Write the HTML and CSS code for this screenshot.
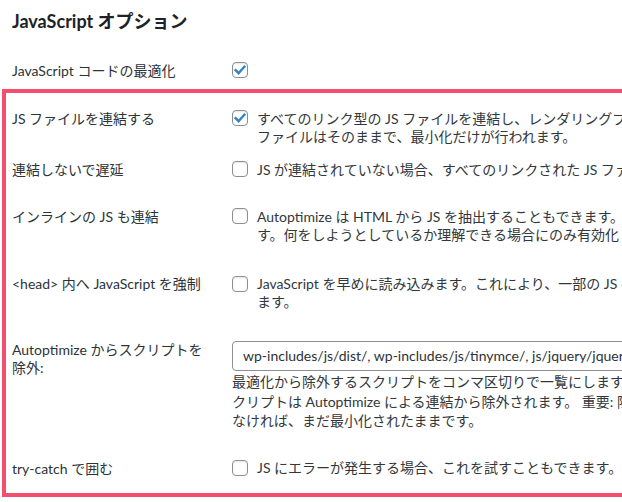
FILE: index.html
```html
<!DOCTYPE html>
<html lang="ja">
<head>
<meta charset="utf-8">
<title>JavaScript オプション</title>
<link rel="stylesheet" href="styles.css">
</head>
<body>
<div class="page">
  <h2 class="title">JavaScript オプション</h2>
  <div class="form">
    <div class="row">
      <div class="label">JavaScript コードの最適化</div>
      <div class="field">
        <span class="cb on"><svg viewBox="0 0 16 16" width="16" height="16"><path d="M3.6 8.2 L6.6 11.2 L12.4 4.6" /></svg></span>
      </div>
    </div>
    <div class="row">
      <div class="label">JS ファイルを連結する</div>
      <div class="field">
        <span class="cb on"><svg viewBox="0 0 16 16" width="16" height="16"><path d="M3.6 8.2 L6.6 11.2 L12.4 4.6" /></svg></span>
        <div class="desc">すべてのリンク型の JS ファイルを連結し、レンダリングブロックを減らします。このオプションが無効な場合、JS<br>ファイルはそのままで、最小化だけが行われます。</div>
      </div>
    </div>
    <div class="row row-sub">
      <div class="label">連結しないで遅延</div>
      <div class="field">
        <span class="cb"></span>
        <div class="desc">JS が連結されていない場合、すべてのリンクされた JS ファイルに defer 属性を追加します。</div>
      </div>
    </div>
    <div class="row row-a">
      <div class="label">インラインの JS も連結</div>
      <div class="field">
        <span class="cb"></span>
        <div class="desc">Autoptimize は HTML から JS を抽出することもできます。ただし、多くのテーマやプラグインでエラーが発生する場合がありま<br>す。何をしようとしているか理解できる場合にのみ有効化してください。</div>
      </div>
    </div>
    <div class="row row-b">
      <div class="label">&lt;head&gt; 内へ JavaScript を強制</div>
      <div class="field">
        <span class="cb cb-low"></span>
        <div class="desc">JavaScript を早めに読み込みます。これにより、一部の JS のエラーが修正されることがありますが、レンダリングが遅くなり<br>ます。</div>
      </div>
    </div>
    <div class="row">
      <div class="label">Autoptimize からスクリプトを<br>除外:</div>
      <div class="field field-stack">
        <div class="input">wp-includes/js/dist/, wp-includes/js/tinymce/, js/jquery/jquery.js, js/jquery/jquery.min.js</div>
        <div class="desc desc-loose">最適化から除外するスクリプトをコンマ区切りで一覧にします。例: 'whatever.js, another/js/' のようにします。これらのス<br>クリプトは Autoptimize による連結から除外されます。 重要: 除外ファイルは、「縮小されていないファイルの最小化」が有効で<br>なければ、まだ最小化されたままです。</div>
      </div>
    </div>
    <div class="row row-c">
      <div class="label">try-catch で囲む</div>
      <div class="field">
        <span class="cb"></span>
        <div class="desc desc-up">JS にエラーが発生する場合、これを試すこともできます。</div>
      </div>
    </div>
  </div>
  <div class="highlight"></div>
</div>
</body>
</html>
```

FILE: styles.css
```css
html, body {
  margin: 0;
  padding: 0;
  background: #ffffff;
  overflow: hidden;
}

body {
  font-family: Lato, "Noto Sans CJK JP", sans-serif;
  font-size: 14px;
  color: #32373c;
}

.page {
  position: relative;
  width: 1100px;
  height: 502px;
  padding: 9px 0 0 12px;
  box-sizing: border-box;
}

.title {
  margin: 0 0 14px;
  font-size: 18px;
  line-height: 24px;
  font-weight: 700;
  color: #1d2327;
}

.row {
  display: flex;
  align-items: flex-start;
  padding: 15px 0;
}

.row-sub {
  padding-top: 0;
}

.row-a {
  padding-top: 14px;
}

.row-b {
  padding-top: 16px;
}

.row-c {
  padding-top: 14px;
}

.label {
  width: 200px;
  padding-right: 20px;
  flex: none;
  line-height: 18px;
  color: #2c3338;
  white-space: nowrap;
}

.field {
  display: flex;
  align-items: flex-start;
  gap: 9px;
}

.field-stack {
  flex-direction: column;
  gap: 1px;
}

.cb {
  flex: none;
  width: 16px;
  height: 16px;
  box-sizing: border-box;
  border: 1px solid #8c8f94;
  border-radius: 4px;
  background: #fff;
  display: flex;
  align-items: center;
  justify-content: center;
  box-shadow: inset 0 1px 2px rgba(0, 0, 0, 0.1);
}

.cb svg {
  display: block;
  margin: -1px;
}

.cb path {
  fill: none;
  stroke: #3582c4;
  stroke-width: 2.4;
  stroke-linecap: square;
  stroke-linejoin: miter;
}

.cb-low {
  margin-top: 1px;
}

.desc {
  line-height: 18px;
  white-space: nowrap;
  color: #32373c;
}

.desc-loose {
  line-height: 19.6px;
}

.desc-up {
  margin-top: -1px;
}

.input {
  width: 700px;
  height: 30px;
  box-sizing: border-box;
  border: 1px solid #8c8f94;
  border-radius: 4px;
  padding: 0 10px;
  line-height: 28px;
  white-space: nowrap;
  overflow: hidden;
  color: #2c3338;
  background: #fff;
}

.highlight {
  position: absolute;
  left: 2px;
  top: 89px;
  right: -40px;
  height: 408px;
  box-sizing: border-box;
  border: 4px solid #f2506e;
  pointer-events: none;
}
```
